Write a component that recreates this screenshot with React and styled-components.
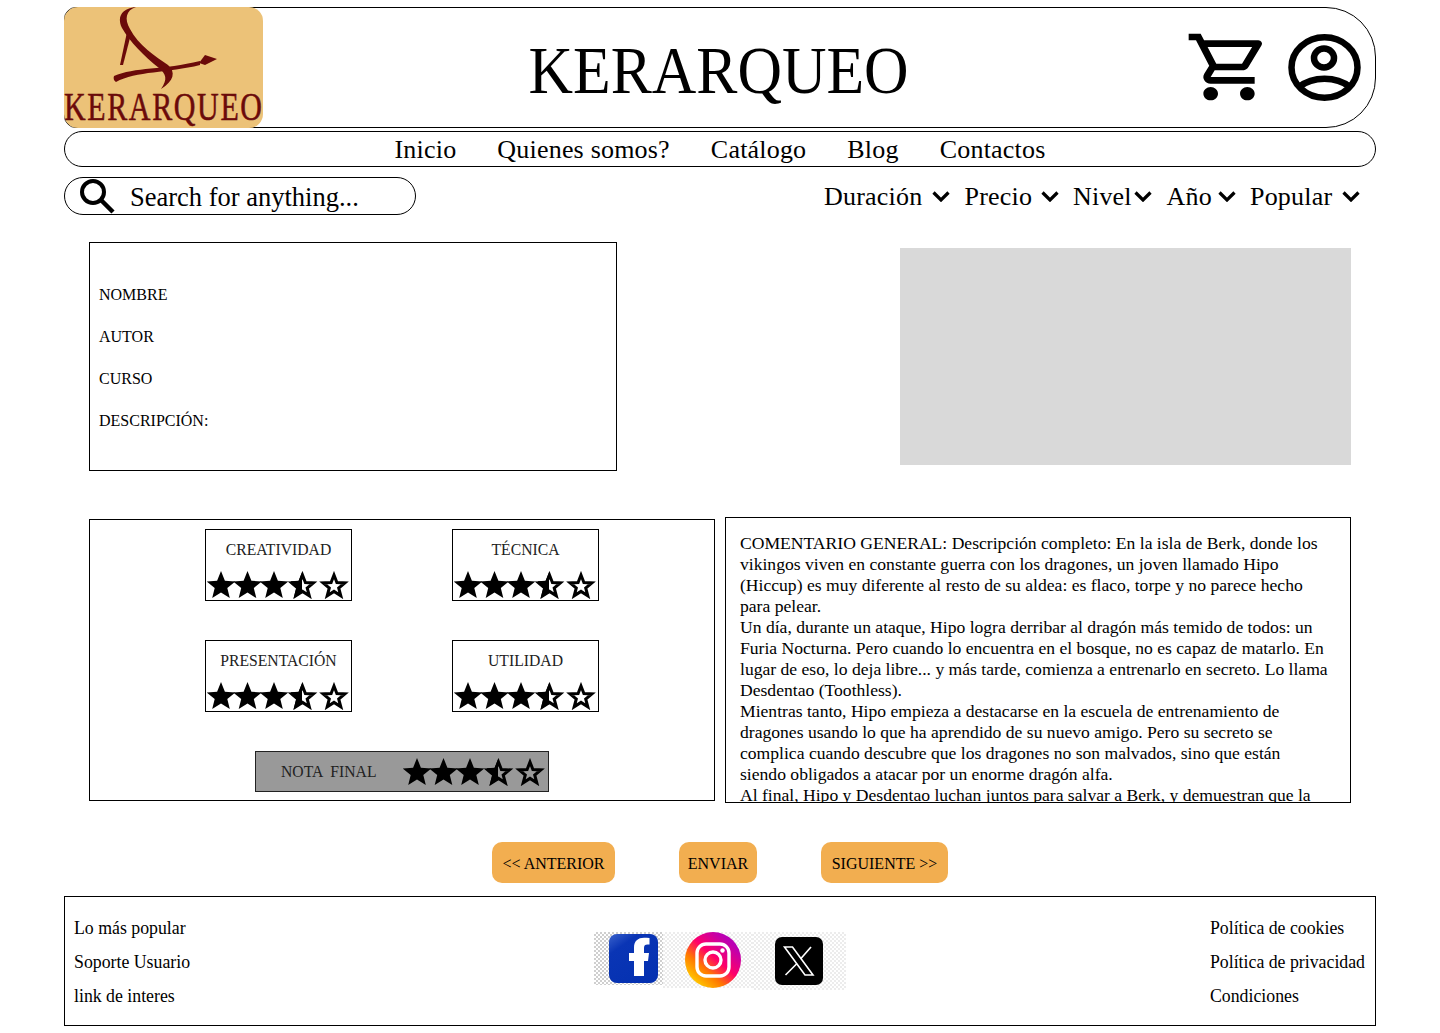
import React from "react"
import styled, { createGlobalStyle } from "styled-components"
import { MdOutlineShoppingCart } from "react-icons/md"

const GlobalStyle = createGlobalStyle`
  html, body {
    margin: 0;
    padding: 0;
    background: #fff;
    color: #000;
    font-family: "Liberation Serif", "Times New Roman", serif;
  }
`

const Page = styled.div`
  width: 1312px;
  height: 1033px;
  margin: 0 auto;
  padding-top: 7px;
  box-sizing: border-box;
  overflow: hidden;
`

const Header = styled.header`
  display: grid;
  grid-template-columns: 1fr auto 1fr;
  align-items: center;
  height: 121px;
  box-sizing: border-box;
  border: 1px solid #000;
  border-radius: 12px 50px 50px 12px;
`

const LogoBox = styled.div`
  width: 199px;
  height: 121px;
  margin: -1px 0 0 -1px;
  border-radius: 14px;
  background: #ecc278;
  overflow: hidden;
`

const Title = styled.h1`
  margin: 5px 2px 0 0;
  font-size: 67px;
  font-weight: 400;
  line-height: 1;
  transform: scaleX(0.92);
`

const HeaderIcons = styled.div`
  display: flex;
  justify-content: flex-end;
  align-items: center;
  gap: 26px;
  padding-right: 14px;
  margin-top: -2px;
`

const CartIcon = styled(MdOutlineShoppingCart)`
  width: 88px;
  height: 80px;
  margin: -6px -10.5px -6px -6px;
`

const Nav = styled.nav`
  display: flex;
  justify-content: center;
  align-items: center;
  gap: 41px;
  height: 36px;
  margin-top: 3px;
  padding-top: 2px;
  box-sizing: border-box;
  border: 1px solid #000;
  border-radius: 18px;
  font-size: 26px;
`

const NavItem = styled.a`
  color: #000;
  letter-spacing: 0.2px;
`

const ToolBar = styled.div`
  display: flex;
  justify-content: space-between;
  align-items: center;
  margin-top: 10px;
  height: 38px;
`

const Search = styled.div`
  display: flex;
  align-items: center;
  gap: 15px;
  width: 352px;
  height: 38px;
  padding-left: 14px;
  box-sizing: border-box;
  border: 1px solid #000;
  border-radius: 19px;
  font-size: 26.5px;
`

const SearchText = styled.span`
  padding-top: 2px;
`

const Filters = styled.div`
  display: flex;
  align-items: center;
  gap: 14.5px;
  padding-right: 16px;
  font-size: 26px;
`

const Filter = styled.div`
  display: flex;
  align-items: center;
  gap: 8px;
  letter-spacing: 0.2px;
`

const FilterLabel = styled.span`
  width: ${p => p.$width}px;
  padding-top: 2px;
`

const TopRow = styled.section`
  display: flex;
  justify-content: space-between;
  align-items: center;
  margin: 27px 25px 0;
`

const InfoBox = styled.div`
  display: flex;
  flex-direction: column;
  justify-content: center;
  gap: 21px;
  width: 528px;
  height: 229px;
  padding: 2px 9px 0;
  box-sizing: border-box;
  border: 1px solid #000;
`

const InfoLine = styled.div`
  font-size: 16px;
  line-height: 21px;
`

const Placeholder = styled.div`
  width: 451px;
  height: 217px;
  background: #d9d9d9;
`

const BottomRow = styled.section`
  display: flex;
  justify-content: space-between;
  align-items: center;
  margin: 46px 25px 0;
`

const Ratings = styled.div`
  display: flex;
  flex-direction: column;
  align-items: center;
  width: 626px;
  height: 282px;
  padding-top: 9px;
  box-sizing: border-box;
  border: 1px solid #000;
`

const RatingGrid = styled.div`
  display: grid;
  grid-template-columns: 147px 147px;
  column-gap: 100px;
  row-gap: 39px;
`

const RatingCard = styled.div`
  display: flex;
  flex-direction: column;
  align-items: center;
  height: 72px;
  padding: 10px 0 0;
  box-sizing: border-box;
  border: 1px solid #000;
  font-size: 15.7px;
  line-height: 20px;
  color: #222;
`

const CardStars = styled.div`
  margin-top: 11px;
  line-height: 0;
`

const FinalBar = styled.div`
  display: flex;
  align-items: center;
  width: 294px;
  height: 41px;
  margin-top: 39px;
  padding-left: 25px;
  box-sizing: border-box;
  border: 1px solid #222;
  background: #999;
  color: #222;
  font-size: 15.7px;
  white-space: pre;
`

const FinalStars = styled.div`
  margin-left: 27px;
  line-height: 0;
`

const Comment = styled.div`
  width: 626px;
  height: 286px;
  padding: 15px 14px 0;
  box-sizing: border-box;
  border: 1px solid #000;
  overflow: hidden;
  font-size: 17.6px;
  line-height: 21px;
`

const CommentLine = styled.div`
  white-space: nowrap;
`

const Buttons = styled.div`
  display: flex;
  justify-content: center;
  gap: 64px;
  margin-top: 39px;
`

const Button = styled.button`
  width: ${p => p.$width}px;
  height: 41px;
  padding: 2px 0 0;
  border: none;
  border-radius: 10px;
  background: #f2ae50;
  color: #000;
  font-family: inherit;
  font-size: 16px;
`

const Footer = styled.footer`
  display: grid;
  grid-template-columns: 1fr auto 1fr;
  align-items: center;
  height: 130px;
  margin-top: 13px;
  padding: 0 10px 0 9px;
  box-sizing: border-box;
  border: 1px solid #000;
`

const FooterLinks = styled.div`
  display: flex;
  flex-direction: column;
  gap: 12px;
  padding-top: 2px;
  align-items: ${p => (p.$right ? "flex-end" : "flex-start")};
`

const FooterLinkGroup = styled.div`
  display: flex;
  flex-direction: column;
  gap: 12px;
  align-items: flex-start;
`

const FooterLink = styled.a`
  font-size: 17.8px;
  line-height: 22px;
  color: #000;
`

const Socials = styled.div`
  display: flex;
  align-items: flex-start;
  height: 58px;
`

const SocialTile = styled.div`
  display: flex;
  justify-content: flex-start;
  align-items: center;
  width: ${p => p.$width}px;
  height: ${p => p.$height}px;
  padding-left: ${p => p.$left}px;
  box-sizing: border-box;
  background-image: conic-gradient(${p => p.$tone} 25%, #fff 0 50%, ${p => p.$tone} 0 75%, #fff 0);
  background-size: 4px 4px;
`

const FacebookMark = styled.div`
  width: 49px;
  height: 49px;
  border-radius: 8px;
  background: linear-gradient(145deg, #3a62cc 0%, #0a35b5 25%, #0330b0 100%);
  line-height: 0;
`

const XMark = styled.div`
  width: 48px;
  height: 48px;
  border-radius: 7px;
  background: #000;
  line-height: 0;
`

const star = (cx, cy, outer, inner) => {
  const points = []
  for (let i = 0; i < 10; i++) {
    const r = i % 2 === 0 ? outer : inner
    const a = (Math.PI / 5) * i - Math.PI / 2
    points.push(`${(cx + r * Math.cos(a)).toFixed(1)},${(cy + r * Math.sin(a)).toFixed(1)}`)
  }
  return points.join(" ")
}

const StarRow = ({ id }) => (
  <svg width="143" height="28" viewBox="0 0 143 28">
    <defs>
      <clipPath id={id}>
        <rect x="84" y="0" width="11" height="28" />
      </clipPath>
    </defs>
    <polygon points={star(14, 15, 15, 6.6)} fill="#000" />
    <polygon points={star(40.5, 15, 15, 6.6)} fill="#000" />
    <polygon points={star(67, 15, 15, 6.6)} fill="#000" />
    <polygon points={star(95.5, 15, 15, 6.6)} fill="#000" clipPath={`url(#${id})`} />
    <polygon points={star(95.5, 15.5, 11.5, 4.9)} fill="none" stroke="#000" strokeWidth="3" />
    <polygon points={star(127, 15.5, 11.5, 4.9)} fill="none" stroke="#000" strokeWidth="3" />
  </svg>
)

const LogoMark = () => (
  <svg width="199" height="121" viewBox="0 0 199 121">
    <g fill="#6b0a0a">
      <path d="M72 0 C62 3 60 12 66 22 C74 38 92 50 104 58 C112 65 110 74 97 82 C104 72 102 67 95 61 C80 49 66 35 58 21 C52 8 60 1 72 0 Z" />
      <path d="M63 25 L67 27 L59 58 L56 58 Z" />
      <path d="M50 69 C70 60 100 63 136 54 L136 58 C104 66 72 64 52 75 C50 74 49 71 50 69 Z" />
      <path d="M135 56 L141 48 L153 52 L141 58 Z" />
    </g>
    <text
      transform="translate(0 112.5) scale(1 1.3)"
      x="0"
      y="0"
      textLength="198"
      lengthAdjust="spacing"
      fontFamily="'Liberation Serif', serif"
      fontSize="30"
      fill="#6b0a0a"
      stroke="#6b0a0a"
      strokeWidth="0.4"
    >
      KERARQUEO
    </text>
  </svg>
)

const UserIcon = () => (
  <svg width="73" height="67" viewBox="0 0 73 67" fill="none" stroke="#000" strokeWidth="6.5">
    <ellipse cx="36.5" cy="33.5" rx="33" ry="30.2" />
    <ellipse cx="36" cy="24" rx="10" ry="9.5" />
    <path d="M11 53 C25 42 48 42 62 53" />
  </svg>
)

const SearchIcon = () => (
  <svg width="36" height="36" viewBox="0 0 36 36" fill="none" stroke="#000">
    <circle cx="14" cy="14" r="11" strokeWidth="4" />
    <path d="M22 22 L34 34" strokeWidth="4.5" />
  </svg>
)

const Chevron = () => (
  <svg width="18" height="11" viewBox="0 0 18 11" fill="none" stroke="#000" strokeWidth="3.2">
    <path d="M1.5 1.5 L9 9 L16.5 1.5" />
  </svg>
)

const FacebookIcon = () => (
  <svg width="49" height="49" viewBox="0 0 49 49">
    <path
      fill="#fff"
      d="M35 42 V27 H39 L40 19 H35 V14 C35 11.5 36 10.5 38.5 10.5 H40.5 V4 C38.5 3.8 36.5 3.7 35 3.7 C29 3.7 25 7 25 13.5 V19 H20 V27 H25 V42 Z"
    />
  </svg>
)

const InstagramIcon = () => (
  <svg width="56" height="56" viewBox="0 0 56 56" fill="none">
    <defs>
      <linearGradient id="ig" x1="0.15" y1="0.95" x2="0.9" y2="0.1">
        <stop offset="0" stopColor="#ffd600" />
        <stop offset="0.3" stopColor="#ff7a00" />
        <stop offset="0.55" stopColor="#ff0069" />
        <stop offset="0.9" stopColor="#b900b4" />
      </linearGradient>
    </defs>
    <circle cx="28" cy="28" r="28" fill="url(#ig)" />
    <rect x="12" y="12" width="32" height="32" rx="9" stroke="#fff" strokeWidth="3.4" />
    <circle cx="28" cy="28" r="8" stroke="#fff" strokeWidth="3.4" />
    <circle cx="37.5" cy="18.5" r="2.2" fill="#fff" />
  </svg>
)

const XIcon = () => (
  <svg width="48" height="48" viewBox="0 0 48 48" fill="none" stroke="#fff" strokeWidth="1.6">
    <path d="M9.5 10 H17.5 L38 38 H30 Z" />
    <path d="M36 10 L25.5 22" />
    <path d="M22 26.5 L10.5 38" />
  </svg>
)

const navItems = ["Inicio", "Quienes somos?", "Catálogo", "Blog", "Contactos"]
const filters = [
  { label: "Duración", width: 100 },
  { label: "Precio", width: 68 },
  { label: "Nivel", width: 53 },
  { label: "Año", width: 43 },
  { label: "Popular", width: 84 },
]
const infoLines = ["NOMBRE", "AUTOR", "CURSO", "DESCRIPCIÓN:"]
const ratings = ["CREATIVIDAD", "TÉCNICA", "PRESENTACIÓN", "UTILIDAD"]

const commentLines = [
  "COMENTARIO GENERAL: Descripción completo: En la isla de Berk, donde los",
  "vikingos viven en constante guerra con los dragones, un joven llamado Hipo",
  "(Hiccup) es muy diferente al resto de su aldea: es flaco, torpe y no parece hecho",
  "para pelear.",
  "Un día, durante un ataque, Hipo logra derribar al dragón más temido de todos: un",
  "Furia Nocturna. Pero cuando lo encuentra en el bosque, no es capaz de matarlo. En",
  "lugar de eso, lo deja libre... y más tarde, comienza a entrenarlo en secreto. Lo llama",
  "Desdentao (Toothless).",
  "Mientras tanto, Hipo empieza a destacarse en la escuela de entrenamiento de",
  "dragones usando lo que ha aprendido de su nuevo amigo. Pero su secreto se",
  "complica cuando descubre que los dragones no son malvados, sino que están",
  "siendo obligados a atacar por un enorme dragón alfa.",
  "Al final, Hipo y Desdentao luchan juntos para salvar a Berk, y demuestran que la",
]

export default function App() {
  return (
    <Page>
      <GlobalStyle />
      <Header>
        <LogoBox>
          <LogoMark />
        </LogoBox>
        <Title>KERARQUEO</Title>
        <HeaderIcons>
          <CartIcon preserveAspectRatio="none" />
          <UserIcon />
        </HeaderIcons>
      </Header>

      <Nav>
        {navItems.map(item => (
          <NavItem key={item}>{item}</NavItem>
        ))}
      </Nav>

      <ToolBar>
        <Search>
          <SearchIcon />
          <SearchText>Search for anything...</SearchText>
        </Search>
        <Filters>
          {filters.map(item => (
            <Filter key={item.label}>
              <FilterLabel $width={item.width}>{item.label}</FilterLabel>
              <Chevron />
            </Filter>
          ))}
        </Filters>
      </ToolBar>

      <TopRow>
        <InfoBox>
          {infoLines.map(line => (
            <InfoLine key={line}>{line}</InfoLine>
          ))}
        </InfoBox>
        <Placeholder />
      </TopRow>

      <BottomRow>
        <Ratings>
          <RatingGrid>
            {ratings.map(name => (
              <RatingCard key={name}>
                {name}
                <CardStars>
                  <StarRow id={`half-${name}`} />
                </CardStars>
              </RatingCard>
            ))}
          </RatingGrid>
          <FinalBar>
            {"NOTA  FINAL"}
            <FinalStars>
              <StarRow id="half-final" />
            </FinalStars>
          </FinalBar>
        </Ratings>
        <Comment>
          {commentLines.map(line => (
            <CommentLine key={line}>{line}</CommentLine>
          ))}
        </Comment>
      </BottomRow>

      <Buttons>
        <Button $width={123}>{"<< ANTERIOR"}</Button>
        <Button $width={78}>ENVIAR</Button>
        <Button $width={127}>{"SIGUIENTE >>"}</Button>
      </Buttons>

      <Footer>
        <FooterLinks>
          <FooterLink>Lo más popular</FooterLink>
          <FooterLink>Soporte Usuario</FooterLink>
          <FooterLink>link de interes</FooterLink>
        </FooterLinks>
        <Socials>
          <SocialTile $width={69} $height={53} $tone="#cfcfcf" $left={15}>
            <FacebookMark>
              <FacebookIcon />
            </FacebookMark>
          </SocialTile>
          <SocialTile $width={89} $height={56} $tone="#ececec" $left={22}>
            <InstagramIcon />
          </SocialTile>
          <SocialTile $width={94} $height={58} $tone="#ececec" $left={23}>
            <XMark>
              <XIcon />
            </XMark>
          </SocialTile>
        </Socials>
        <FooterLinks $right>
          <FooterLinkGroup>
            <FooterLink>Política de cookies</FooterLink>
            <FooterLink>Política de privacidad</FooterLink>
            <FooterLink>Condiciones</FooterLink>
          </FooterLinkGroup>
        </FooterLinks>
      </Footer>
    </Page>
  )
}
